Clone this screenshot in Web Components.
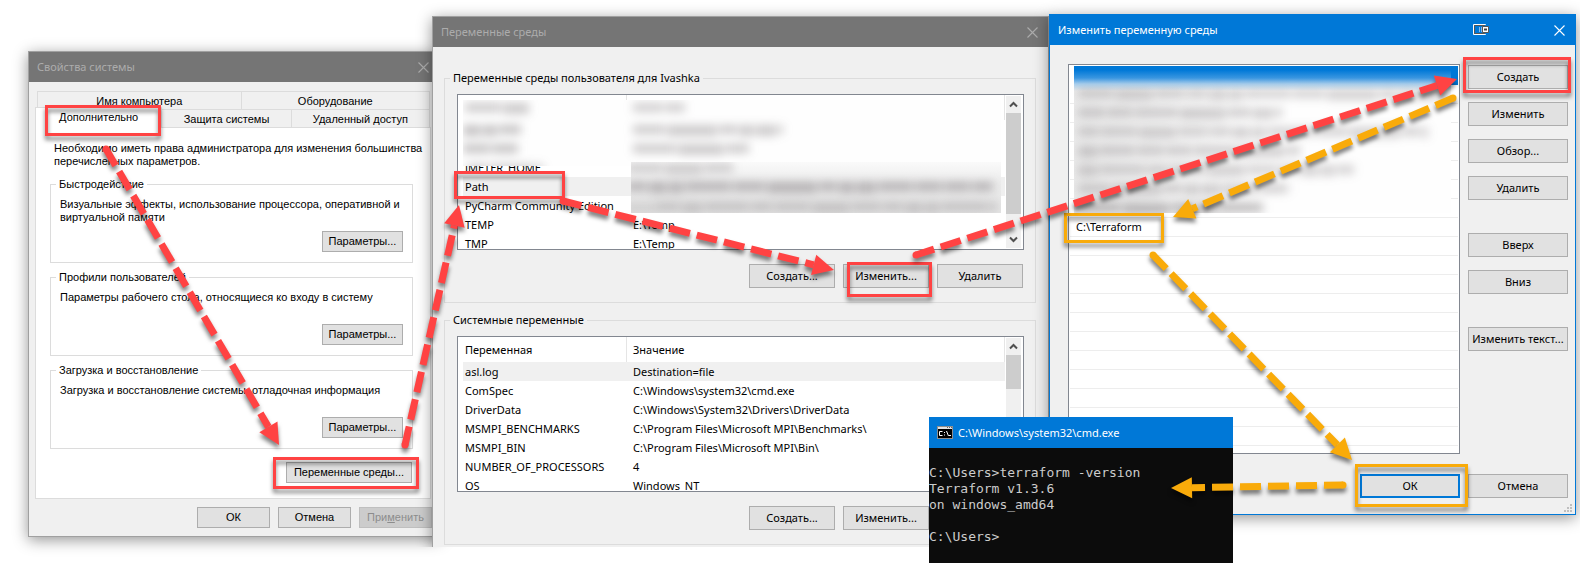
<!DOCTYPE html>
<html lang="ru">
<head>
<meta charset="utf-8">
<title>Переменные среды</title>
<style>
  body { margin: 0; background: #fff; font: 11px/16px "Noto Sans", "Open Sans", sans-serif; color: #000; }
</style>
</head>
<body>
<desk-top></desk-top>

<script>
const define = (name, html, setup) => {
  const tpl = document.createElement('template');
  tpl.innerHTML = html;
  customElements.define(name, class extends HTMLElement {
    constructor() {
      super();
      this.attachShadow({ mode: 'open' }).append(tpl.content.cloneNode(true));
    }
    connectedCallback() { if (setup) setup(this, this.shadowRoot); }
  });
};

/* Push button */
define('win-button', `
<style>
  :host { display: block; height: 24px; }
  button { box-sizing: border-box; width: 100%; height: 100%; padding: 0; margin: 0; display: block;
    border: 1px solid #adadad; border-radius: 0; background: #e1e1e1; color: #000; font: inherit; white-space: nowrap; }
  button:disabled { background: #ccc; border-color: #bfbfbf; color: #8c8c8c; }
  :host([primary]) button { border: 2px solid #0078d7; }
</style>
<button type="button"><slot></slot></button>`,
(el, root) => { root.querySelector('button').disabled = el.hasAttribute('disabled'); });

/* Window frame with a title bar */
define('app-window', `
<style>
  :host { position: absolute; box-sizing: border-box; display: flex; flex-direction: column;
    background: #f0f0f0; border: 1px solid #a0a0a0; box-shadow: 0 3px 14px rgba(0,0,0,.42); }
  :host([active]) { border-color: #0078d7; }
  header { height: 30px; flex: none; display: flex; align-items: center; padding: 0 8px; background: #757575; color: #acacac; }
  :host([active]) header { background: #0078d7; color: #fff; }
  h2 { flex: 1; margin: 0; font: inherit; }
  .close { width: 16px; height: 16px; padding: 0; border: 0; background: none; color: inherit; display: flex; align-items: center; justify-content: center; }
  .extra { display: none; margin-right: 62px; }
  :host([active]) .extra { display: block; }
</style>
<header>
  <h2><slot name="title"></slot></h2>
  <svg class="extra" width="16" height="12" viewBox="0 0 16 12" aria-hidden="true">
    <path d="M12.500 1V.5H.5v10h12V10" fill="none" stroke="#fff"/>
    <path d="M1.500 1.500h10v8h-10z" fill="none" stroke="#555"/>
    <path d="M6.500 3v5M8.500 3v5" stroke="#8ab8e8"/>
    <path d="M9.500 2.500h6v6h-6z" fill="#fff" stroke="#555"/>
    <path d="M11 4.500h3v2h-3z" fill="#444"/>
  </svg>
  <button class="close" type="button" aria-label="Закрыть">
    <svg width="11" height="11" viewBox="0 0 11 11" aria-hidden="true"><path d="M.5.5l10 10M10.500.5l-10 10" stroke="currentColor" stroke-width="1.100"/></svg>
  </button>
</header>
<slot></slot>`);

/* Titled group of controls */
define('group-box', `
<style>
  :host { display: block; }
  fieldset { box-sizing: border-box; margin: 0; min-width: 0; height: var(--group-height, auto);
    border: 1px solid #dcdcdc; padding: var(--group-padding, 8px 11px 14px 12px); display: flex; flex-direction: column; }
  legend { padding: 0 3px; margin-left: -7px; }
  :host([compact]) legend { margin-left: -4px; }
</style>
<fieldset><legend><slot name="legend"></slot></legend><slot></slot></fieldset>`);

/* Settings group: description and its button */
define('settings-group', `
<style>
  :host { display: block; --group-height: 85px; --group-padding: 7px 9px 10px 9px; }
  p { margin: 0; }
  win-button { width: 81px; height: 21px; margin-top: auto; align-self: flex-end; }
</style>
<group-box compact><span slot="legend"><slot name="legend"></slot></span>
  <p><slot></slot></p><win-button>Параметры...</win-button></group-box>`);

/* Vertical scroll bar */
define('scroll-bar', `
<style>
  :host { display: flex; flex-direction: column; width: 15px; background: #f0f0f0; }
  span { height: 17px; display: flex; align-items: center; justify-content: center; }
  i { display: block; background: #cdcdcd; height: var(--thumb, 34px); }
  b { flex: 1; }
  path { fill: none; stroke: #505050; stroke-width: 2; }
</style>
<span><svg width="9" height="7"><path d="M1 5.500l3.500-3.500 3.500 3.500"/></svg></span><i></i><b></b>
<span><svg width="9" height="7"><path d="M1 1.500l3.500 3.500 3.500-3.500"/></svg></span>`);

/* Illegible, blurred lines. lines="y,from,to,opacity;..." */
define('blurred-area', `
<style>
  :host { position: absolute; overflow: hidden; display: block; background: #fefefe; }
  svg { display: block; width: 100%; height: 100%; filter: blur(5px); overflow: visible; }
</style>
<svg aria-hidden="true"></svg>`,
(el, root) => {
  let out = '', seed = 7;
  const rnd = () => (seed = (seed * 73 + 41) % 211) / 211;
  for (const line of el.getAttribute('lines').split(';')) {
    const [y, from, to, opacity] = line.split(',').map(Number);
    for (let x = from; x < to;) {
      const w = Math.min(to - x, 14 + Math.round(rnd() * 36));
      out += `<rect x="${x}" y="${y - 5}" width="${w}" height="${rnd() > .5 ? 11 : 9}" fill="#4c4448" opacity="${opacity}"/>`;
      x += w + 2;
    }
  }
  root.querySelector('svg').innerHTML = out;
});

/* Table of variables */
define('variable-list', `
<style>
  :host { position: relative; box-sizing: border-box; height: 156px; overflow: hidden; display: flex;
    border: 1px solid #828790; background: #fff; }
  table { flex: 1; align-self: flex-start; margin-left: 5px; border-collapse: separate; border-spacing: 0; table-layout: fixed; width: 0; }
  th, td { height: 19px; padding: 0 0 0 2px; text-align: left; font-weight: normal; white-space: nowrap; line-height: 16px; }
  th { height: 25px; border-right: 1px solid #e5e5e5; box-sizing: border-box; }
  th:first-child { width: 164px; }
  th + th, td + td { padding-left: 6px; }
  tr.current td { background: #f0f0f0; }
  scroll-bar { margin: 1px 2px 1px 1px; }
</style>
<table><thead><tr><th></th><th></th></tr></thead><tbody></tbody></table>
<scroll-bar></scroll-bar>
<slot></slot>`,
(el, root) => {
  const heads = root.querySelectorAll('th');
  (el.getAttribute('heads') || '').split('|').forEach((t, i) => heads[i].textContent = t);
  const current = Number(el.getAttribute('current'));
  const body = root.querySelector('tbody');
  el.getAttribute('rows').split(';').forEach((row, i) => {
    const tr = body.insertRow();
    if (i === current) tr.className = 'current';
    const cells = row.split('|');
    for (let c = 0; c < 2; c++) tr.insertCell().textContent = cells[c] || '';
  });
});

/* Row of buttons under a list */
define('button-row', `
<style>
  :host { display: grid; grid-template-columns: repeat(3, 86px); justify-content: flex-end; gap: 8px; margin: 14px 1px 0 0; }
</style><slot></slot>`);

/* System properties */
define('system-properties', `
<style>
  :host { display: block; padding: 9px 7px 0 6px; font: 11px/13px "Liberation Sans", Arial, sans-serif; }
  button { box-sizing: border-box; font: inherit; color: inherit; padding: 2px 0 0; border: 1px solid #dcdcdc; border-bottom: 0; background: #f0f0f0; border-radius: 0; height: 18px; margin: 0; }
  button + button { border-left: 0; }
  .row { display: grid; margin: 0 2px; }
  .first { grid-template-columns: 204fr 188fr; }
  .second { grid-template-columns: 125fr 129fr 138fr; }
  .selected { background: #fff; margin: -2px 0 -1px -2px; height: 21px; position: relative; padding: 0 0 1px; }
  .panel { background: #fff; border: 1px solid #dcdcdc; padding: 14px 17px 15px 14px; margin-right: 1px; }
  .panel > p { margin: 0 0 10px 4px; white-space: nowrap; }
  settings-group + settings-group { margin-top: 8px; }
  .env { width: 126px; height: 21px; margin: 13px 1px 0 auto; }
  footer { display: flex; justify-content: flex-end; gap: 8px; margin-top: 8px; }
  footer win-button { width: 73px; height: 21px; }
</style>
<div role="tablist">
  <div class="row first"><button role="tab">Имя компьютера</button><button role="tab">Оборудование</button></div>
  <div class="row second"><button role="tab" class="selected" aria-selected="true">Дополнительно</button><button role="tab">Защита системы</button><button role="tab">Удаленный доступ</button></div>
</div>
<div class="panel" role="tabpanel">
  <p>Необходимо иметь права администратора для изменения большинства<br>перечисленных параметров.</p>
  <settings-group><span slot="legend">Быстродействие</span>Визуальные эффекты, использование процессора, оперативной и виртуальной памяти</settings-group>
  <settings-group><span slot="legend">Профили пользователей</span>Параметры рабочего стола, относящиеся ко входу в систему</settings-group>
  <settings-group><span slot="legend">Загрузка и восстановление</span>Загрузка и восстановление системы, отладочная информация</settings-group>
  <win-button class="env">Переменные среды...</win-button>
</div>
<footer><win-button>ОК</win-button><win-button>Отмена</win-button><win-button disabled>При<u>м</u>енить</win-button></footer>`);

/* Environment variables */
define('environment-variables', `
<style>
  :host { display: flex; flex-direction: column; gap: 9px; padding: 23px 12px 0 11px; }
  .user { --thumb: 101px; }
  .names { left: 5px; top: 5px; width: 538px; height: 66px; }
  .values { left: 173px; top: 67px; width: 370px; height: 51px; background: linear-gradient(#fafafa, #ececec 40%, #e6e6e6); }
</style>
<group-box><span slot="legend">Переменные среды пользователя для Ivashka</span>
  <variable-list class="user" current="3" rows=";;JMETER_HOME|;Path|;PyCharm Community Edition|;TEMP|E:\\Temp;TMP|E:\\Temp">
    <blurred-area class="names" lines="8,2,66,.28;8,170,222,.26;30,0,58,.32;30,170,320,.28;49,0,56,.32;49,170,286,.28;69,4,80,.26"></blurred-area>
    <blurred-area class="values" lines="6,-4,102,.24;25,-4,362,.34;45,-6,26,.14;45,26,366,.24"></blurred-area>
  </variable-list>
  <button-row><win-button>Создать...</win-button><win-button>Изменить...</win-button><win-button>Удалить</win-button></button-row>
</group-box>
<group-box><span slot="legend">Системные переменные</span>
  <variable-list heads="Переменная|Значение" current="0" rows="asl.log|Destination=file;ComSpec|C:\\Windows\\system32\\cmd.exe;DriverData|C:\\Windows\\System32\\Drivers\\DriverData;MSMPI_BENCHMARKS|C:\\Program Files\\Microsoft MPI\\Benchmarks\\;MSMPI_BIN|C:\\Program Files\\Microsoft MPI\\Bin\\;NUMBER_OF_PROCESSORS|4;OS|Windows_NT"></variable-list>
  <button-row><win-button>Создать...</win-button><win-button>Изменить...</win-button></button-row>
</group-box>`);

/* Edit one variable */
define('edit-variable', `
<style>
  :host { position: relative; flex: 1; display: grid; grid-template-columns: 1fr 100px; grid-template-rows: auto auto 1fr; column-gap: 8px; padding: 19px 7px 0 18px; }
  .list { position: relative; box-sizing: border-box; height: 390px; border: 1px solid #828790; background: #fff; overflow: hidden; }
  ul { list-style: none; margin: 1px; padding: 0; }
  li { box-sizing: border-box; height: 19px; border-bottom: 1px solid #ededed; padding-left: 6px; line-height: 18px; }
  li:first-child { background: #0078d7; margin-left: 4px; border-color: #0078d7; }
  blurred-area { left: 5px; top: 1px; width: 377px; height: 147px;
    background: linear-gradient(#0078d7 4px, #3a96e0 12px, #a8cfee 18px, rgba(255,255,255,0) 25px), linear-gradient(90deg, #ebebeb, #fefefe 50%); }
  nav { display: flex; flex-direction: column; gap: 13px; padding-top: 1px; }
  .apart { margin-top: 20px; }
  footer { grid-column: 1 / 3; display: flex; justify-content: flex-end; gap: 8px; margin-top: 20px; }
  footer win-button { width: 100px; }
  .grip { position: absolute; right: 3px; bottom: 2px; fill: #bfbfbf; }
</style>
<div class="list"><ul></ul>
  <blurred-area lines="28,4,375,.24;47,4,208,.26;66,4,354,.24;85,4,226,.26;104,4,280,.24;123,4,216,.26;142,4,190,.36"></blurred-area>
</div>
<nav>
  <win-button>Создать</win-button><win-button>Изменить</win-button><win-button>Обзор...</win-button><win-button>Удалить</win-button>
  <win-button class="apart">Вверх</win-button><win-button>Вниз</win-button>
  <win-button class="apart">Изменить текст...</win-button>
</nav>
<footer><win-button primary>ОК</win-button><win-button>Отмена</win-button></footer>
<svg class="grip" width="8" height="8" aria-hidden="true"><path d="M6 0h2v2H6zM3 3h2v2H3zM6 3h2v2H6zM0 6h2v2H0zM3 6h2v2H3zM6 6h2v2H6z"/></svg>`,
(el, root) => {
  const ul = root.querySelector('ul');
  for (let i = 0; i < 20; i++) {
    const li = document.createElement('li');
    if (i === 8) li.textContent = 'C:\\Terraform';
    ul.append(li);
  }
});

/* Console */
define('console-window', `
<style>
  :host { position: absolute; display: flex; flex-direction: column; background: #0c0c0c; color: #ccc; }
  header { box-sizing: border-box; height: 31px; display: flex; align-items: center; gap: 5px; padding-left: 8px; background: #0078d7; color: #fff; }
  h2 { font: inherit; margin: 0; }
  pre { margin: 1px 0 0; font: 13px/16px "DejaVu Sans Mono", "Liberation Mono", monospace; }
</style>
<header>
  <svg width="16" height="13" viewBox="0 0 16 13" aria-hidden="true">
    <path d="M0 0h16v13H0z" fill="#8e8e8e"/><path d="M1 1h14v2H1z" fill="#e4e4e4"/><path d="M1 3h14v9H1z" fill="#000"/>
    <path d="M10 1h1v1h-1zM12 1h1v1h-1zM14 1h1v1h-1z" fill="#666"/>
    <path d="M5.500 5.500H2.500v4h3M7.500 6v1M7.500 8.500v1M9.500 5l2 5M12 9.500h2" fill="none" stroke="#fff"/>
  </svg>
  <h2>C:\\Windows\\system32\\cmd.exe</h2>
</header>
<pre>

C:\\Users&gt;terraform -version
Terraform v1.3.6
on windows_amd64

C:\\Users&gt;</pre>`);

/* Arrows and frames drawn over the desktop */
define('annotation-layer', `
<style>
  :host { position: absolute; inset: 0; pointer-events: none; }
  svg { display: block; width: 100%; height: 100%; }
  g { filter: drop-shadow(0 4px 2px rgba(0,0,0,.5)); }
  rect { fill: none; stroke-width: 3; }
  line { stroke-width: 7; stroke-dasharray: 21 7; stroke-dashoffset: 2; }
</style>
<svg aria-hidden="true"></svg>`,
(el, root) => {
  const red = '#ff4343', orange = '#f9ab0a';
  const frames = [
    [red, 45, 105, 161, 136], [red, 273, 457, 419, 489], [red, 454, 171, 565, 199],
    [red, 847, 262, 932, 297], [red, 1463, 57, 1571, 93],
    [orange, 1064, 213, 1164, 243], [orange, 1355, 464, 1468, 507]
  ];
  const arrows = [
    [red, 106, 149, 279, 445], [red, 405, 445, 459, 205], [red, 563, 201, 834, 270], [red, 916, 255, 1457, 79],
    [orange, 1453, 98, 1173, 217], [orange, 1153, 255, 1352, 460], [orange, 1343, 485, 1171, 488]
  ];
  const box = ([c, l, t, r, b]) => `<g><rect x="${l + 1.5}" y="${t + 1.5}" width="${r - l - 3}" height="${b - t - 3}" stroke="${c}"/></g>`;
  const arrow = ([c, x1, y1, x2, y2]) => {
    const len = Math.hypot(x2 - x1, y2 - y1), ux = (x2 - x1) / len, uy = (y2 - y1) / len;
    const bx = x2 - ux * 21, by = y2 - uy * 21;
    return `<g><line x1="${x1}" y1="${y1}" x2="${bx}" y2="${by}" stroke="${c}"/><circle cx="${x1}" cy="${y1}" r="3.500" fill="${c}"/>
      <path fill="${c}" d="M${x2} ${y2}L${bx - uy * 10.500} ${by + ux * 10.500}L${bx + uy * 10.500} ${by - ux * 10.500}z"/></g>`;
  };
  root.querySelector('svg').innerHTML = frames.map(box).join('') + arrows.map(arrow).join('');
});

/* Desktop with its windows */
define('desk-top', `
<style>
  :host { display: block; position: relative; min-height: 100vh; overflow: hidden; }
  .system { left: 28px; top: 51px; width: 412px; height: 486px; }
  .environment { left: 432px; top: 16px; width: 617px; height: 531px; border-bottom: 0; clip-path: inset(-20px -20px 0 -20px); }
  .edit { left: 1049px; top: 14px; width: 527px; height: 501px; }
  console-window { left: 929px; top: 417px; width: 304px; bottom: 0; }
</style>
<app-window class="system"><span slot="title">Свойства системы</span><system-properties></system-properties></app-window>
<app-window class="environment"><span slot="title">Переменные среды</span><environment-variables></environment-variables></app-window>
<app-window class="edit" active><span slot="title">Изменить переменную среды</span><edit-variable></edit-variable></app-window>
<console-window></console-window>
<annotation-layer></annotation-layer>`);
</script>
</body>
</html>
